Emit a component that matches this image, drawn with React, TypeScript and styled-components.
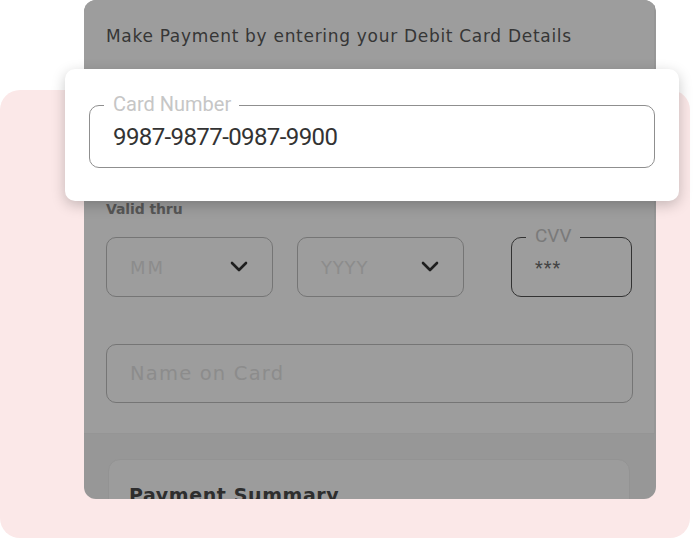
import React from "react";
import styled, { createGlobalStyle } from "styled-components";

const Global = createGlobalStyle`
  html, body { margin: 0; padding: 0; background: #ffffff; }
  * { box-sizing: border-box; }
`;

const poppins = `"DejaVu Sans", "Open Sans", sans-serif`;
const roboto = `Roboto, "Liberation Sans", sans-serif`;

const Stage = styled.div`
  position: relative;
  width: 699px;
  height: 538px;
  overflow: hidden;
  padding-left: 84px;
  &::before {
    content: "";
    position: absolute;
    left: 0;
    top: 90px;
    width: 690px;
    height: 448px;
    border-radius: 20px;
    background: #fbe8e8;
  }
`;

const Panel = styled.div`
  position: relative;
  width: 572px;
  height: 499px;
  border-radius: 12px;
  background: #979797;
  overflow: hidden;
  display: flex;
  flex-direction: column;
`;

const FormSection = styled.div`
  display: flex;
  flex-direction: column;
  width: 571px;
  padding: 0 21px 30px 22px;
  background: #9d9d9d;
  border-right: 1px solid #969696;
  border-bottom: 1px solid #959595;
`;

const Header = styled.div`
  height: 72px;
  display: flex;
  align-items: center;
  font-family: ${poppins};
  font-size: 17px;
  letter-spacing: 0.7px;
  color: #363636;
`;

const FieldBox = styled.div<{ $h: number; $top: number; $border: string; $bw?: number }>`
  position: relative;
  height: ${(p) => p.$h}px;
  margin-top: ${(p) => p.$top}px;
  border: ${(p) => p.$bw ?? 1}px solid ${(p) => p.$border};
  border-radius: 10px;
  display: flex;
  align-items: center;
`;

const Slot = styled(FieldBox)`
  visibility: hidden;
`;

const FloatLabel = styled.span<{ $bg: string; $color: string; $size: number }>`
  position: absolute;
  left: 14px;
  top: ${(p) => -Math.round(p.$size * 0.68)}px;
  padding: 0 8px 0 9px;
  background: ${(p) => p.$bg};
  font-family: ${roboto};
  font-size: ${(p) => p.$size}px;
  line-height: 1.2;
  color: ${(p) => p.$color};
`;

const Value = styled.span<{ $size: number; $color: string; $ls?: number }>`
  padding-left: 23px;
  font-family: ${roboto};
  font-size: ${(p) => p.$size}px;
  color: ${(p) => p.$color};
  letter-spacing: ${(p) => p.$ls ?? 0}px;
`;

const Placeholder = styled.span<{ $size: number; $ls?: number }>`
  flex: 1;
  padding-left: 23px;
  font-family: ${poppins};
  font-weight: 400;
  font-size: ${(p) => p.$size}px;
  letter-spacing: ${(p) => p.$ls ?? 0}px;
  color: #8c8c8c;
`;

const SmallLabel = styled.div`
  margin-top: 33px;
  height: 16px;
  line-height: 16px;
  font-family: ${poppins};
  font-weight: 700;
  font-size: 14px;
  letter-spacing: -0.1px;
  color: #575757;
`;

const Row = styled.div`
  margin-top: 20px;
  display: flex;
  gap: 24px;
`;

const SelectBox = styled.div`
  width: 167px;
  height: 60px;
  border: 1px solid #757575;
  border-radius: 10px;
  display: flex;
  align-items: center;
  padding-right: 24px;
`;

const CvvBox = styled(FieldBox)`
  width: 121px;
  margin-left: 23px;
`;

const Lower = styled.div`
  flex: 1;
  padding: 25px 26px 0 24px;
`;

const SummaryCard = styled.div`
  height: 120px;
  border: 1px solid #939393;
  border-radius: 12px;
  background: #9c9c9c;
  padding: 24px 20px;
`;

const SummaryTitle = styled.div`
  font-family: ${poppins};
  font-weight: 700;
  font-size: 19px;
  letter-spacing: 0.6px;
  color: #2e2e2e;
`;

const Overlay = styled.div`
  position: absolute;
  left: 65px;
  top: 69px;
  width: 614px;
  height: 132px;
  background: #ffffff;
  border-radius: 10px;
  box-shadow: 0 4px 14px rgba(0, 0, 0, 0.22);
  padding: 36px 24px 0;
`;

const Chevron = () => (
  <svg width="18" height="12" viewBox="0 0 18 12" aria-hidden>
    <polyline points="2,2 9,9 16,2" fill="none" stroke="#1e1e1e" strokeWidth="2.6" strokeLinecap="round" strokeLinejoin="round" />
  </svg>
);

export default function App() {
  return (
    <>
      <Global />
      <Stage>
        <Panel>
          <FormSection>
            <Header>Make Payment by entering your Debit Card Details</Header>
            <Slot $h={63} $top={33} $border="#7a7a7a" />
            <SmallLabel>Valid thru</SmallLabel>
            <Row>
              <SelectBox>
                <Placeholder $size={18} $ls={2}>MM</Placeholder>
                <Chevron />
              </SelectBox>
              <SelectBox>
                <Placeholder $size={18} $ls={0.8}>YYYY</Placeholder>
                <Chevron />
              </SelectBox>
              <CvvBox $h={60} $top={0} $border="#333333" $bw={1.5}>
                <FloatLabel $bg="#9d9d9d" $color="#7a7a7a" $size={19}>CVV</FloatLabel>
                <Value $size={18} $color="#444" $ls={1}>***</Value>
              </CvvBox>
            </Row>
            <FieldBox $h={59} $top={47} $border="#757575">
              <Placeholder $size={19.5} $ls={1.2}>Name on Card</Placeholder>
            </FieldBox>
          </FormSection>
          <Lower>
            <SummaryCard>
              <SummaryTitle>Payment Summary</SummaryTitle>
            </SummaryCard>
          </Lower>
        </Panel>
        <Overlay>
          <FieldBox $h={63} $top={0} $border="#8f8f8f">
            <FloatLabel $bg="#ffffff" $color="#c6c6c6" $size={20}>Card Number</FloatLabel>
            <Value $size={24} $color="#333" $ls={-0.6}>9987-9877-0987-9900</Value>
          </FieldBox>
        </Overlay>
      </Stage>
    </>
  );
}
